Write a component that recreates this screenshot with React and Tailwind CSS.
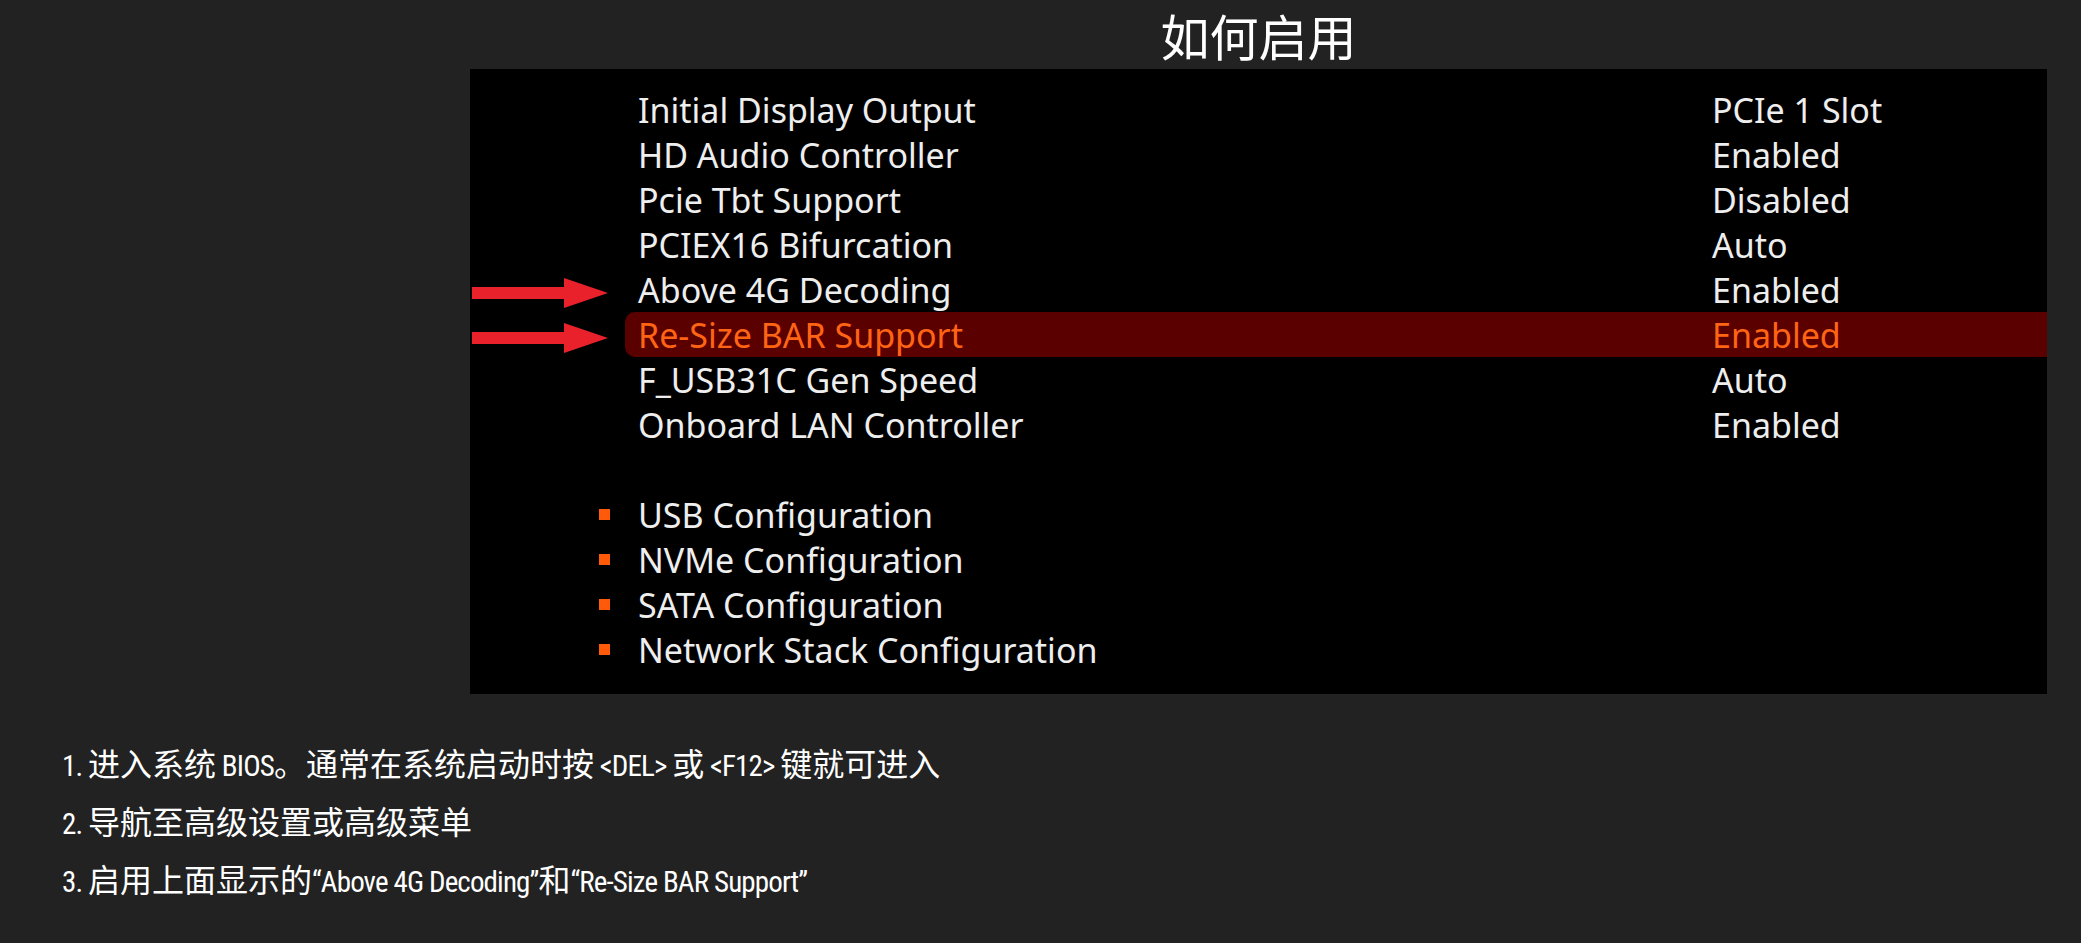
import React from "react";

const rows = [
  { label: "Initial Display Output", value: "PCIe 1 Slot" },
  { label: "HD Audio Controller", value: "Enabled" },
  { label: "Pcie Tbt Support", value: "Disabled" },
  { label: "PCIEX16 Bifurcation", value: "Auto" },
  { label: "Above 4G Decoding", value: "Enabled", arrow: true },
  { label: "Re-Size BAR Support", value: "Enabled", arrow: true, active: true },
  { label: "F_USB31C Gen Speed", value: "Auto" },
  { label: "Onboard LAN Controller", value: "Enabled" },
];

const subs = [
  "USB Configuration",
  "NVMe Configuration",
  "SATA Configuration",
  "Network Stack Configuration",
];

function Arrow() {
  return (
    <svg width="155" height="45" viewBox="0 0 155 45" className="block">
      <rect x="2" y="20" width="94" height="12" fill="#e8212b" />
      <polygon points="94,11 138,26 94,41" fill="#e8212b" />
    </svg>
  );
}

const biosFont = { fontFamily: '"Noto Sans", "Open Sans", sans-serif' };
const cjk = { fontFamily: '"Noto Sans CJK SC", "Noto Sans", sans-serif' };
const narrow = {
  fontFamily:
    '"Roboto Condensed", "Liberation Sans Narrow", "DejaVu Sans Condensed", Roboto, sans-serif',
};

function L({ children }) {
  return (
    <span
      className="text-[29px] leading-none tracking-[-0.03em] font-stretch-condensed"
      style={narrow}
    >
      {children}
    </span>
  );
}

export default function App() {
  return (
    <div className="min-h-screen w-full bg-[#222222] text-white">
      <div className="ml-[470px] w-[1577px]">
        <div
          className="h-[69px] flex items-center justify-center text-[49px] leading-none text-white"
          style={cjk}
        >
          如何启用
        </div>
        <div className="h-[625px] bg-black pt-[18px] text-[#eeeeee]" style={biosFont}>
          {rows.map((r) => (
            <div key={r.label} className="flex h-[45px] items-stretch">
              <div className="w-[155px] shrink-0">{r.arrow ? <Arrow /> : null}</div>
              <div
                className={
                  r.active
                    ? "flex flex-1 items-center rounded-l-[10px] bg-[#5a0100] pl-[13px] text-[#ff6414]"
                    : "flex flex-1 items-center pl-[13px]"
                }
              >
                <span className="w-[1074px] text-[34px] leading-none">{r.label}</span>
                <span className="text-[34px] leading-none">{r.value}</span>
              </div>
            </div>
          ))}
          <div className="h-[45px]" />
          {subs.map((s) => (
            <div key={s} className="flex h-[45px] items-center">
              <div className="w-[129px] shrink-0" />
              <div className="h-[11px] w-[11px] bg-[#ff5a0a]" />
              <span className="ml-[28px] text-[34px] leading-none">{s}</span>
            </div>
          ))}
        </div>
      </div>
      <div className="mt-[39px] pl-[62px] text-[32px] leading-[58px] text-white" style={cjk}>
        <p className="h-[58px]">
          <L>1. </L>进入系统<L> BIOS</L>。通常在系统启动时按<L> &lt;DEL&gt; </L>或<L> &lt;F12&gt; </L>键就可进入
        </p>
        <p className="h-[58px]">
          <L>2. </L>导航至高级设置或高级菜单
        </p>
        <p className="h-[58px]">
          <L>3. </L>启用上面显示的<L>“Above 4G Decoding”</L>和<L>“Re-Size BAR Support”</L>
        </p>
      </div>
    </div>
  );
}
